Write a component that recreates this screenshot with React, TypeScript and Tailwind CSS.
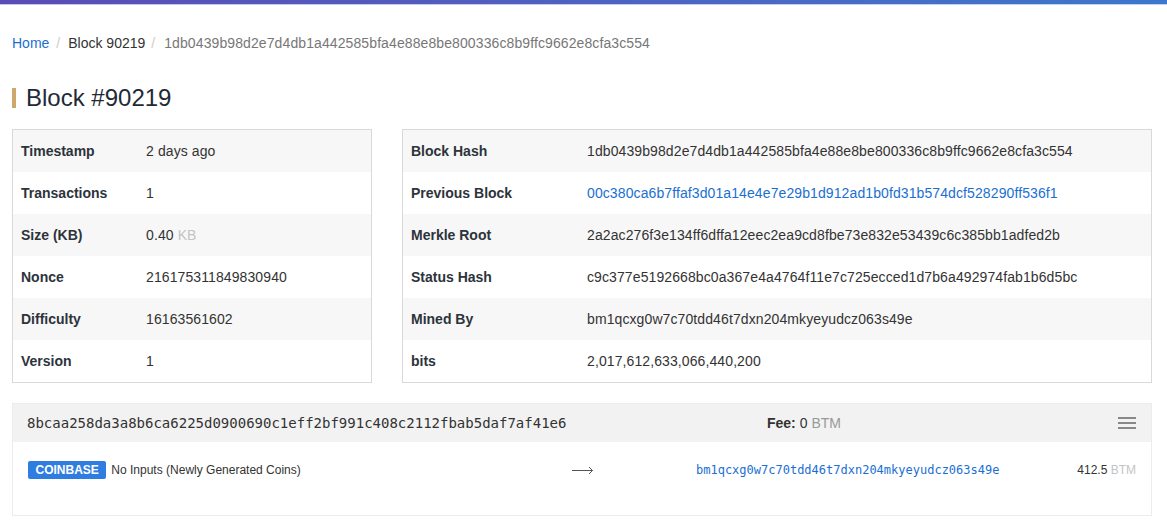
import React from "react";

type Row = { label: string; value: React.ReactNode };

const summary: Row[] = [
  { label: "Timestamp", value: "2 days ago" },
  { label: "Transactions", value: "1" },
  {
    label: "Size (KB)",
    value: (
      <>
        0.40 <span className="text-[#c4c4c4]">KB</span>
      </>
    ),
  },
  { label: "Nonce", value: "216175311849830940" },
  { label: "Difficulty", value: "16163561602" },
  { label: "Version", value: "1" },
];

const hashes: Row[] = [
  { label: "Block Hash", value: "1db0439b98d2e7d4db1a442585bfa4e88e8be800336c8b9ffc9662e8cfa3c554" },
  {
    label: "Previous Block",
    value: (
      <a className="text-[#1a6fd3]" href="#">
        00c380ca6b7ffaf3d01a14e4e7e29b1d912ad1b0fd31b574dcf528290ff536f1
      </a>
    ),
  },
  { label: "Merkle Root", value: "2a2ac276f3e134ff6dffa12eec2ea9cd8fbe73e832e53439c6c385bb1adfed2b" },
  { label: "Status Hash", value: "c9c377e5192668bc0a367e4a4764f11e7c725ecced1d7b6a492974fab1b6d5bc" },
  { label: "Mined By", value: "bm1qcxg0w7c70tdd46t7dxn204mkyeyudcz063s49e" },
  { label: "bits", value: "2,017,612,633,066,440,200" },
];

const InfoTable = ({ rows, labelWidth }: { rows: Row[]; labelWidth: string }) => (
  <div className="border border-[#d9d9d9]">
    {rows.map((r, i) => (
      <div
        key={r.label}
        className={`flex items-center h-[42px] px-[8px] text-[14px] ${i % 2 === 0 ? "bg-[#f7f7f7]" : "bg-white"}`}
      >
        <div className={`${labelWidth} shrink-0 font-bold text-[#2d333b]`}>{r.label}</div>
        <div className="text-[#333] tracking-[0.1px]">{r.value}</div>
      </div>
    ))}
  </div>
);

const Arrow = () => (
  <svg width="22" height="10" viewBox="0 0 22 10" fill="none" stroke="#555" strokeWidth="1">
    <path d="M0 5.5h20.5" />
    <path d="M17 2l3.5 3.5L17 9" />
  </svg>
);

export default function App() {
  return (
    <div className="min-h-screen bg-white font-['Liberation_Sans',Arial,sans-serif] text-[#333]">
      <div className="h-[4px] bg-gradient-to-r from-[#5a4cb6] to-[#3b77cc]" />
      <div className="h-[1px] bg-gradient-to-r from-[#c9c5ea] to-[#c0d3f0]" />

      <div className="px-[12px] w-[1164px]">
        <nav className="flex items-center text-[14px] leading-[20px] mt-[28px]">
          <a href="#" className="text-[#1a6fd3]">Home</a>
          <span className="ml-[7px] mr-[8px] text-[#ccc]">/</span>
          <span className="text-[#333]">Block 90219</span>
          <span className="ml-[6px] mr-[9px] text-[#ccc]">/</span>
          <span className="text-[#777] tracking-[0.1px]">
            1db0439b98d2e7d4db1a442585bfa4e88e8be800336c8b9ffc9662e8cfa3c554
          </span>
        </nav>

        <div className="flex items-center mt-[32px] h-[26px]">
          <div className="w-[4px] h-[20px] bg-[#cfa76d]" />
          <h1 className="ml-[10px] text-[24px] leading-[26px] text-[#1f2a37]">Block #90219</h1>
        </div>

        <div className="flex gap-[30px] mt-[18px] w-[1140px]">
          <div className="w-[360px]">
            <InfoTable rows={summary} labelWidth="w-[125px]" />
          </div>
          <div className="w-[750px]">
            <InfoTable rows={hashes} labelWidth="w-[176px]" />
          </div>
        </div>

        <div className="mt-[20px] w-[1140px] border border-[#ececec]">
          <div className="flex items-center h-[38px] bg-[#f2f2f2] px-[14px]">
            <div className="w-[740px] font-['DejaVu_Sans_Mono',monospace] text-[14px] text-[#333]">
              8bcaa258da3a8b6ca6225d0900690c1eff2bf991c408c2112fbab5daf7af41e6
            </div>
            <div className="flex-1 text-[14px]">
              <span className="font-bold text-[#333]">Fee:</span> 0 <span className="text-[#999]">BTM</span>
            </div>
            <div className="flex flex-col gap-[3px] w-[18px] mr-[1px]">
              <span className="h-[2px] bg-[#888]" />
              <span className="h-[2px] bg-[#888]" />
              <span className="h-[2px] bg-[#888]" />
            </div>
          </div>
          <div className="flex items-start h-[73px] pt-[19px] px-[15px] text-[12px]">
            <div className="flex items-center w-[544px] h-[18px]">
              <span className="bg-[#2f7de1] text-white font-bold px-[7.5px] leading-[18px] rounded-[2px] text-[12px]">
                COINBASE
              </span>
              <span className="ml-[5px] text-[#333]">No Inputs (Newly Generated Coins)</span>
            </div>
            <div className="flex items-center h-[18px] w-[124px]">
              <Arrow />
            </div>
            <div className="flex items-center justify-between flex-1 h-[18px]">
              <a href="#" className="font-['DejaVu_Sans_Mono',monospace] text-[12px] text-[#1a6fd3]">
                bm1qcxg0w7c70tdd46t7dxn204mkyeyudcz063s49e
              </a>
              <span className="text-[#333]">
                412.5 <span className="text-[#c4c4c4]">BTM</span>
              </span>
            </div>
          </div>
        </div>
      </div>
    </div>
  );
}
